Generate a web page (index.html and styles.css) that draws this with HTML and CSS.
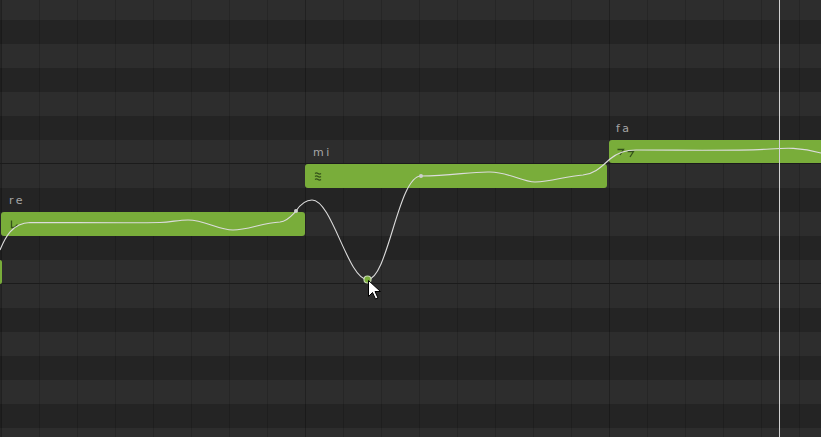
FILE: index.html
```html
<!DOCTYPE html>
<html>
<head>
  <meta charset="UTF-8">
  <title>Piano Roll</title>
  <link rel="stylesheet" href="styles.css">
</head>
<body>
  <div class="roll">
    <div class="grid">
      <div class="key white" style="grid-row: 1"></div>
      <div class="key black" style="grid-row: 2"></div>
      <div class="key white" style="grid-row: 3"></div>
      <div class="key black" style="grid-row: 4"></div>
      <div class="key white" style="grid-row: 5"></div>
      <div class="key black" style="grid-row: 6"></div>
      <div class="key white split" style="grid-row: 7"></div>
      <div class="key white" style="grid-row: 8"></div>
      <div class="key black" style="grid-row: 9"></div>
      <div class="key white" style="grid-row: 10"></div>
      <div class="key black" style="grid-row: 11"></div>
      <div class="key white split" style="grid-row: 12"></div>
      <div class="key white" style="grid-row: 13"></div>
      <div class="key black" style="grid-row: 14"></div>
      <div class="key white" style="grid-row: 15"></div>
      <div class="key black" style="grid-row: 16"></div>
      <div class="key white" style="grid-row: 17"></div>
      <div class="key black" style="grid-row: 18"></div>
      <div class="key white" style="grid-row: 19"></div>

      <span class="lyric lyric-fa">fa</span>
      <div class="note note-fa"></div>

      <span class="lyric lyric-mi">mi</span>
      <div class="note note-mi"></div>

      <span class="lyric lyric-re">re</span>
      <div class="note note-re"></div>

      <div class="note note-stub"></div>
    </div>

    <svg class="overlay" width="821" height="437" viewBox="0 0 821 437">
      <g class="marks">
        <path d="M11.5 220.5 V227.5 H14.5 L17.5 224.5"/>
        <path d="M315 173.5 q1.5 -1.2 3 0 t3 0 M315 176.5 q1.5 -1.2 3 0 t3 0 M315 179.5 q1.5 -1.2 3 0 t3 0"/>
        <path d="M617.5 149.5 H623.5 L620 155 M627.5 151.5 H633.5 L630 157"/>
      </g>
      <path class="pitch" d="M0 250
        C 5 238, 12 223, 30 222.5
        C 70 222.5, 140 223, 160 222.5
        C 172 222, 178 220, 188 220
        C 205 220, 218 230, 233 230
        C 248 230, 262 223, 280 222
        C 288 221, 292 215, 296 211
        C 300 205, 305 200, 312 200
        C 332 200, 348 279.5, 367.5 279.5
        C 388 279.5, 398 176, 421 176
        C 452 176, 470 171.5, 490 172
        C 510 172.5, 522 182, 535 182
        C 552 182, 565 176, 583 175
        C 595 174, 602 166, 610 159
        C 617 153, 624 150, 636 150
        C 690 150, 740 151, 770 149
        C 785 148, 800 147, 821 153"/>
      <circle class="node" cx="296" cy="211" r="2"/>
      <circle class="node" cx="421" cy="176" r="2"/>
      <circle class="handle" cx="367.5" cy="279.5" r="3.5"/>
      <line class="playhead" x1="779.5" y1="0" x2="779.5" y2="437"/>
      <path class="cursor" d="M368.5 280.5 V296.5 L372.5 292.5 L375.5 299 L378 298 L375 291.5 L380.5 291.5 Z"/>
    </svg>
  </div>
</body>
</html>
```
FILE: styles.css
```css
html, body {
  margin: 0;
  padding: 0;
  background: #2d2d2d;
}
body {
  font: 11px/24px "DejaVu Sans", sans-serif;
}
.roll {
  position: relative;
  width: 821px;
  height: 437px;
  overflow: hidden;
}
.grid {
  display: grid;
  grid-template-columns: 1px repeat(22, 38px);
  grid-template-rows: repeat(19, 24px);
  margin-top: -4px;
}
.key {
  grid-column: 1 / -1;
  box-sizing: border-box;
  background-image:
    repeating-linear-gradient(90deg, rgba(0, 0, 0, 0.14) 0 1px, transparent 1px 304px),
    repeating-linear-gradient(90deg, rgba(0, 0, 0, 0.16) 0 1px, transparent 1px 38px);
  background-position: 1px 0;
}
.white {
  background-color: #2d2d2d;
}
.black {
  background-color: #242424;
}
.split {
  border-bottom: 1px solid #1b1b1b;
}
.lyric {
  color: #a6a6a6;
  letter-spacing: 2.5px;
  padding: 1px 0 0 8px;
  white-space: nowrap;
}
.lyric-fa {
  grid-row: 6;
  grid-column: 18 / 22;
  padding-left: 7px;
}
.lyric-mi {
  grid-row: 7;
  grid-column: 10 / 14;
}
.lyric-re {
  grid-row: 9;
  grid-column: 2 / 6;
}
.note {
  background: #79ad3a;
  border-radius: 3px;
}
.note-fa {
  grid-row: 7;
  grid-column: 18 / -1;
  margin-bottom: 1px;
}
.note-mi {
  grid-row: 8;
  grid-column: 10 / 18;
  margin-right: 2px;
}
.note-re {
  grid-row: 10;
  grid-column: 2 / 10;
}
.note-stub {
  grid-row: 12;
  grid-column: 1 / 2;
  width: 2px;
  border-radius: 0 2px 2px 0;
}
.overlay {
  position: absolute;
  top: 0;
  left: 0;
}
.marks path {
  fill: none;
  stroke: #34511a;
  stroke-width: 1.3;
}
.pitch {
  fill: none;
  stroke: #dcdcdc;
  stroke-width: 1.1;
}
.node {
  fill: #cfcfcf;
}
.handle {
  fill: #79ad3a;
  stroke: #c8d8b4;
  stroke-width: 1.2;
}
.playhead {
  stroke: #d2d2d2;
  stroke-width: 1;
}
.cursor {
  fill: #fff;
  stroke: #000;
  stroke-width: 1;
  stroke-linejoin: round;
}
```
